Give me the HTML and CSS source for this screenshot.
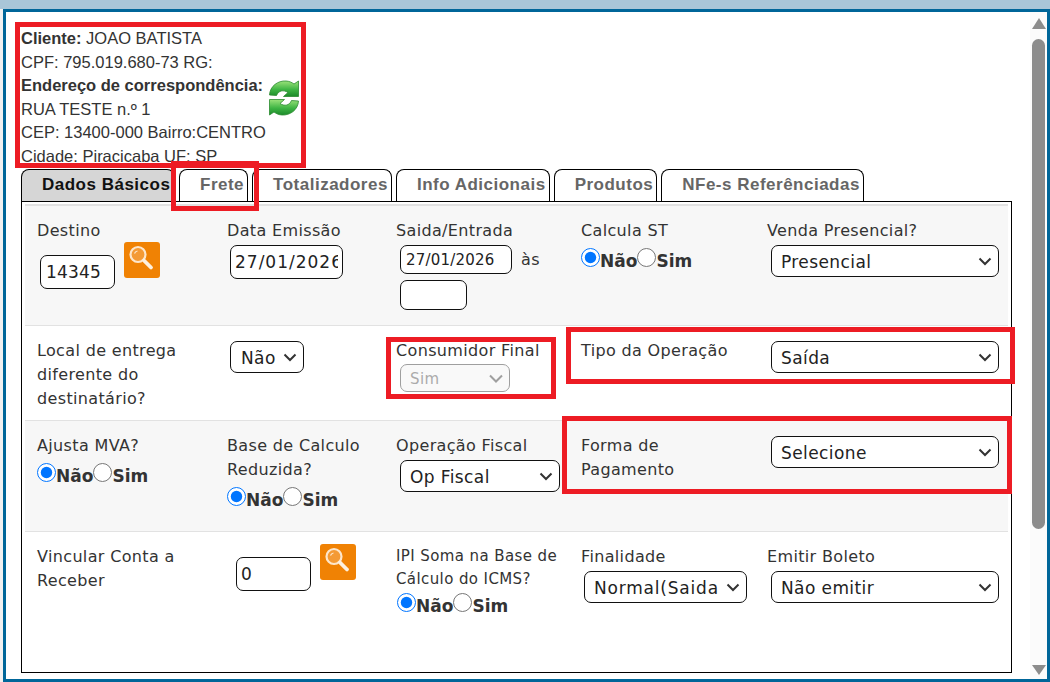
FILE: index.html
```html
<!DOCTYPE html>
<html lang="pt">
<head>
<meta charset="utf-8">
<title>NFe</title>
<link rel="stylesheet" href="styles.css">
</head>
<body>
<svg class="defs" width="0" height="0" aria-hidden="true">
  <defs>
    <linearGradient id="g1" x1="0" y1="0" x2="0" y2="1"><stop offset="0" stop-color="#9be27a"/><stop offset=".55" stop-color="#3fb544"/><stop offset="1" stop-color="#1b8a2a"/></linearGradient>
    <symbol id="lens" viewBox="0 0 36 36">
      <rect x="0" y="0" width="36" height="36" rx="3" fill="#f08204"/>
      <circle cx="14" cy="12.500" r="7.500" fill="#f49a35" stroke="#fde6cb" stroke-width="2.200"/>
      <path d="M10.500 11.500a4 4 0 0 1 3-2.500" fill="none" stroke="#fde6cb" stroke-width="1.200"/>
      <path d="M20 18.500l7 7" stroke="#fdf0df" stroke-width="3.800" stroke-linecap="round"/>
    </symbol>
  </defs>
</svg>
<div class="window">
  <main class="content">
    <section class="client">
      <div class="client-text">
        <div><b>Cliente:</b> JOAO BATISTA</div>
        <div>CPF: 795.019.680-73 RG:</div>
        <div><b>Endereço de correspondência:</b></div>
        <div>RUA TESTE n.º 1</div>
        <div>CEP: 13400-000 Bairro:CENTRO</div>
        <div>Cidade: Piracicaba UF: SP</div>
      </div>
      <svg class="refresh" viewBox="0 0 32 36" width="32" height="36" aria-hidden="true">
        <path d="M1.500 15C2 6 10 .5 18 1C21.500 1.200 24 2.500 26 4L30.500 1V16.500H15.500L20 12.500C15.500 9.500 10.500 10.500 8.500 15.500Z" fill="url(#g1)" stroke="#2a8a2e" stroke-width=".8"/>
        <path d="M30.500 21C30 30 22 35.500 14 35C10.500 34.800 8 33.500 6 32L1.500 35V19.500H16.500L12 23.500C16.500 26.500 21.500 25.500 23.500 20.500Z" fill="url(#g1)" stroke="#2a8a2e" stroke-width=".8"/>
      </svg>
    </section>

    <nav class="tabs">
      <div class="tab active">Dados Básicos</div>
      <div class="tab">Frete</div>
      <div class="tab">Totalizadores</div>
      <div class="tab">Info Adicionais</div>
      <div class="tab">Produtos</div>
      <div class="tab">NFe-s Referênciadas</div>
    </nav>

    <section class="panel">
      <div class="row row1 alt">
        <div class="cell">
          <div class="label">Destino</div>
          <div class="with-icon wi-destino">
            <input class="field f-destino" value="14345">
            <svg class="lens" aria-hidden="true"><use href="#lens"/></svg>
          </div>
        </div>
        <div class="cell">
          <div class="label">Data Emissão</div>
          <input class="field f-data" value="27/01/2026">
        </div>
        <div class="cell">
          <div class="label">Saida/Entrada</div>
          <div class="saida">
            <input class="field f-saida" value="27/01/2026"><span class="as">às</span>
            <input class="field f-hora">
          </div>
        </div>
        <div class="cell">
          <div class="label">Calcula ST</div>
          <div class="radios"><input type="radio" name="st" checked><b>Não</b><input type="radio" name="st"><b>Sim</b></div>
        </div>
        <div class="cell">
          <div class="label">Venda Presencial?</div>
          <select class="field s-wide"><option>Presencial</option></select>
        </div>
      </div>

      <div class="row row2">
        <div class="cell"><div class="label">Local de entrega diferente do destinatário?</div></div>
        <div class="cell"><select class="field s-nao"><option>Não</option></select></div>
        <div class="cell">
          <div class="label">Consumidor Final</div>
          <select class="field s-cons" disabled><option>Sim</option></select>
        </div>
        <div class="cell"><div class="label">Tipo da Operação</div></div>
        <div class="cell"><select class="field s-wide"><option>Saída</option></select></div>
      </div>

      <div class="row row3 alt">
        <div class="cell">
          <div class="label">Ajusta MVA?</div>
          <div class="radios"><input type="radio" name="mva" checked><b>Não</b><input type="radio" name="mva"><b>Sim</b></div>
        </div>
        <div class="cell">
          <div class="label">Base de Calculo Reduzida?</div>
          <div class="radios"><input type="radio" name="base" checked><b>Não</b><input type="radio" name="base"><b>Sim</b></div>
        </div>
        <div class="cell">
          <div class="label">Operação Fiscal</div>
          <select class="field s-op"><option>Op Fiscal</option></select>
        </div>
        <div class="cell"><div class="label narrow">Forma de Pagamento</div></div>
        <div class="cell"><select class="field s-wide"><option>Selecione</option></select></div>
      </div>

      <div class="row row4">
        <div class="cell"><div class="label">Vincular Conta a Receber</div></div>
        <div class="cell">
          <div class="with-icon wi-conta">
            <input class="field f-conta" value="0">
            <svg class="lens" aria-hidden="true"><use href="#lens"/></svg>
          </div>
        </div>
        <div class="cell">
          <div class="label small">IPI Soma na Base de Cálculo do ICMS?</div>
          <div class="radios r-ipi"><input type="radio" name="ipi" checked><b>Não</b><input type="radio" name="ipi"><b>Sim</b></div>
        </div>
        <div class="cell">
          <div class="label">Finalidade</div>
          <select class="field s-fin"><option>Normal(Saida)</option></select>
        </div>
        <div class="cell">
          <div class="label">Emitir Boleto</div>
          <select class="field s-wide"><option>Não emitir</option></select>
        </div>
      </div>
    </section>
  </main>
  <aside class="scrollbar" aria-hidden="true">
    <div class="arrow up"></div>
    <div class="thumb"></div>
    <div class="arrow down"></div>
  </aside>
</div>

<div class="mark m-client"></div>
<div class="mark m-frete"></div>
<div class="mark m-cons"></div>
<div class="mark m-tipo"></div>
<div class="mark m-forma"></div>
</body>
</html>
```

FILE: styles.css
```css
* { box-sizing: border-box; }
html, body { margin: 0; height: 682px; overflow: hidden; }
body {
  background: linear-gradient(#a9c6d8 0 9px, #f1f1f1 9px);
  padding: 9px 0 0 3px;
  position: relative;
  font-family: "DejaVu Sans", Verdana, sans-serif;
  color: #333;
}
.defs { position: absolute; }
.window {
  height: 673px;
  border: 3px solid #006699;
  background: #fff;
  display: flex;
}
.content { flex: 1; min-width: 0; padding-left: 15px; }
.client {
  display: flex;
  height: 157px;
  padding-top: 15px;
  font: 16.5px/23.6px "Liberation Sans", Arial, sans-serif;
}
.client-text { width: 247px; flex: none; white-space: nowrap; }
.refresh { margin-top: 53px; }
.tabs { display: flex; gap: 4px; height: 32px; }
.tab {
  height: 33px;
  border: 1px solid #000;
  border-bottom: 0;
  border-radius: 8px 8px 0 0;
  padding: 0 3px 0 20px;
  font: bold 17px/30px "Liberation Sans", Arial, sans-serif;
  letter-spacing: .5px;
  color: #666;
  background: #fff;
  position: relative;
}
.tab.active { width: 154px; color: #111; background: #d6d6d6; white-space: nowrap; }
.panel {
  width: 991px;
  height: 472px;
  border: 1px solid #000;
  padding: 2px 3px 0;
  position: relative;
  background: #fff;
}
.row {
  display: grid;
  grid-template-columns: 190px 169px 185px 186px 1fr;
  padding: 13px 0 0 12px;
  border-top: 1px solid #e2e2e2;
  font-size: 16px;
  letter-spacing: .35px;
  line-height: 24px;
}
.alt { background: #f7f7f7; }
.row1 { height: 121px; border-top-width: 2px; }
.row2 { height: 95px; }
.row3 { height: 111px; }
.row4 { height: 139px; }
.label { color: #333; }
.narrow { max-width: 130px; }
.small { font-size: 15px; letter-spacing: .4px; line-height: 23px; }
.field {
  display: block;
  border: 1px solid #111;
  border-radius: 7px;
  background-color: #fff;
  color: #222;
  font: 17px "DejaVu Sans", Verdana, sans-serif;
  letter-spacing: .4px;
  margin: 0;
  padding: 0 0 0 4px;
}
select.field {
  appearance: none;
  height: 32px;
  margin-top: 2px;
  padding: 2px 24px 0 9px;
  background-image: url("data:image/svg+xml,%3Csvg xmlns='http://www.w3.org/2000/svg' width='14' height='9'%3E%3Cpath d='M1.500 1.500l5.500 5.500 5.500-5.500' fill='none' stroke='%23333' stroke-width='2'/%3E%3C/svg%3E");
  background-repeat: no-repeat;
  background-position: right 6px center;
}
.with-icon { display: flex; align-items: flex-start; gap: 9px; }
.lens { width: 36px; height: 36px; flex: none; }
.wi-destino { margin-top: -1px; }
.f-destino { width: 75px; height: 34px; margin: 13px 0 0 3px; padding-left: 5px; letter-spacing: .2px; }
.f-data { width: 113px; height: 34px; margin: 2px 0 0 3px; padding-right: 4px; letter-spacing: 1px; }
.saida { display: flex; flex-wrap: wrap; align-items: center; width: 165px; margin-top: 2px; }
.f-saida { width: 112px; height: 29px; margin-left: 4px; font-size: 15px; letter-spacing: .2px; padding-left: 5px; }
.as { margin-left: 9px; color: #333; }
.f-hora { width: 67px; height: 30px; margin: 6px 0 0 4px; }
.radios { display: flex; align-items: flex-start; font-size: 17px; letter-spacing: 0; line-height: 22px; height: 24px; margin-top: 5px; }
.radios input { width: 19px; height: 19px; margin: 0; flex: none; }
.radios b { padding-top: 2px; color: #333; }
.r-ipi { margin: 2px 0 0 1px; }
select.s-wide { width: 228px; margin-left: 4px; }
select.s-nao { width: 74px; margin-left: 3px; padding-left: 10px; }
select.s-cons {
  width: 110px;
  height: 28px;
  margin: 1px 0 0 4px;
  font-size: 15px;
  color: #888;
  border-color: #777;
  background-color: #f7f7f7;
  background-image: url("data:image/svg+xml,%3Csvg xmlns='http://www.w3.org/2000/svg' width='14' height='9'%3E%3Cpath d='M1 1.500l6 6 6-6' fill='none' stroke='%23777' stroke-width='2'/%3E%3C/svg%3E");
}
select.s-op { width: 160px; margin-left: 4px; }
.wi-conta { margin: -1px 0 0 9px; }
.f-conta { width: 75px; height: 34px; margin-top: 13px; }
select.s-fin { width: 163px; margin-left: 3px; padding-right: 28px; letter-spacing: .8px; }
.scrollbar {
  width: 17px;
  background: #fbfbfb;
  padding-top: 6px;
  display: flex;
  flex-direction: column;
  align-items: center;
}
.arrow { width: 0; height: 0; border-left: 7px solid transparent; border-right: 7px solid transparent; }
.arrow.up { border-bottom: 11px solid #8c8c8c; }
.thumb { width: 13px; height: 490px; margin-top: 10px; border-radius: 7px; background: #8c8c8c; }
.arrow.down { border-top: 10px solid #8c8c8c; margin-top: 136px; }
.mark { position: absolute; border: 5px solid #ed1c24; pointer-events: none; }
.m-client { left: 15px; top: 22px; width: 291px; height: 146px; }
.m-frete { left: 171px; top: 161px; width: 88px; height: 50px; }
.m-cons { left: 386px; top: 337px; width: 170px; height: 62px; }
.m-tipo { left: 566px; top: 327px; width: 449px; height: 57px; }
.m-forma { left: 562px; top: 416px; width: 450px; height: 78px; }
```
